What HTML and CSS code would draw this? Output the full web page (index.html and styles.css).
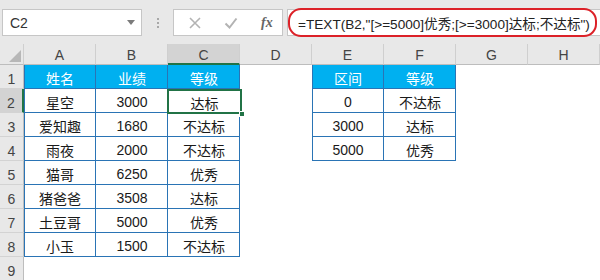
FILE: index.html
```html
<!DOCTYPE html>
<html lang="zh">
<head>
<meta charset="utf-8">
<link rel="stylesheet" href="styles.css">
</head>
<body>
<div class="topbar">
  <div class="namebox"><span class="ref">C2</span><span class="caret"></span></div>
  <div class="dots"><i></i><i></i><i></i></div>
  <div class="fxbox">
    <svg class="ico" width="14" height="14" viewBox="0 0 14 14"><path d="M2 2 L12 12 M12 2 L2 12" stroke="#b3b3b3" stroke-width="1.6" fill="none"/></svg>
    <svg class="ico" width="14" height="14" viewBox="0 0 14 14"><path d="M1.5 7.5 L5.5 11.5 L12.5 2.5" stroke="#b3b3b3" stroke-width="2" fill="none"/></svg>
    <span class="fx">fx</span>
  </div>
  <div class="formula"><div class="oval">=TEXT(B2,"[&gt;=5000]优秀;[&gt;=3000]达标;不达标")</div></div>
</div>
<div class="sheet">
  <div class="corner"><svg width="12" height="12" viewBox="0 0 12 12"><path d="M12 0 L12 12 L0 12 Z" fill="#b7b7b7"/></svg></div>
  <div class="ch">A</div><div class="ch">B</div><div class="ch csel">C</div><div class="ch">D</div><div class="ch">E</div><div class="ch">F</div><div class="ch">G</div><div class="ch">H</div>

  <div class="rh">1</div><div class="th l">姓名</div><div class="th">业绩</div><div class="th">等级</div><div class="c"></div><div class="th l">区间</div><div class="th">等级</div><div class="c"></div><div class="c"></div>

  <div class="rh rsel">2</div><div class="t l">星空</div><div class="t">3000</div><div class="t sel">达标<span class="handle"></span></div><div class="c"></div><div class="t l">0</div><div class="t">不达标</div><div class="c"></div><div class="c"></div>

  <div class="rh">3</div><div class="t l">爱知趣</div><div class="t">1680</div><div class="t">不达标</div><div class="c"></div><div class="t l">3000</div><div class="t">达标</div><div class="c"></div><div class="c"></div>

  <div class="rh">4</div><div class="t l">雨夜</div><div class="t">2000</div><div class="t">不达标</div><div class="c"></div><div class="t l">5000</div><div class="t">优秀</div><div class="c"></div><div class="c"></div>

  <div class="rh">5</div><div class="t l">猫哥</div><div class="t">6250</div><div class="t">优秀</div><div class="c"></div><div class="c"></div><div class="c"></div><div class="c"></div><div class="c"></div>

  <div class="rh">6</div><div class="t l">猪爸爸</div><div class="t">3508</div><div class="t">达标</div><div class="c"></div><div class="c"></div><div class="c"></div><div class="c"></div><div class="c"></div>

  <div class="rh">7</div><div class="t l">土豆哥</div><div class="t">5000</div><div class="t">优秀</div><div class="c"></div><div class="c"></div><div class="c"></div><div class="c"></div><div class="c"></div>

  <div class="rh">8</div><div class="t l">小玉</div><div class="t">1500</div><div class="t">不达标</div><div class="c"></div><div class="c"></div><div class="c"></div><div class="c"></div><div class="c"></div>

  <div class="rh">9</div><div class="c"></div><div class="c"></div><div class="c"></div><div class="c"></div><div class="c"></div><div class="c"></div><div class="c"></div><div class="c"></div>
</div>
</body>
</html>
```

FILE: styles.css
```css
* { box-sizing: border-box; }
html, body { margin: 0; padding: 0; background: #fff; }
body {
  width: 600px;
  height: 280px;
  overflow: hidden;
  font-family: "Liberation Sans", "Noto Sans CJK SC", sans-serif;
  color: #222;
}
.topbar {
  height: 44px;
  background: #e8e8e8;
  display: flex;
  align-items: flex-start;
  padding: 9px 0 0 2px;
}
.namebox {
  width: 140px;
  height: 27px;
  background: #fff;
  border: 1px solid #c6c6c6;
  display: flex;
  align-items: center;
  justify-content: space-between;
  padding: 0 6px 0 7px;
}
.ref { font-size: 14px; color: #333; }
.caret {
  width: 0; height: 0;
  border-left: 4px solid transparent;
  border-right: 4px solid transparent;
  border-top: 5px solid #7b7b7b;
}
.dots {
  width: 31px;
  height: 27px;
  display: flex;
  flex-direction: column;
  align-items: center;
  justify-content: center;
  gap: 2px;
}
.dots i { display: block; width: 2px; height: 2px; background: #a8a8a8; }
.fxbox {
  width: 110px;
  height: 27px;
  background: #fff;
  border: 1px solid #c6c6c6;
  display: flex;
  align-items: center;
  padding-left: 14px;
  gap: 22px;
}
.fx {
  font-family: "Liberation Serif", serif;
  font-style: italic;
  font-weight: bold;
  font-size: 14px;
  color: #666;
  margin-left: 1px;
}
.formula {
  margin-left: 4px;
  flex: 1;
  height: 27px;
  background: #fff;
  border: 1px solid #c6c6c6;
  border-right: none;
  position: relative;
}
.oval {
  position: absolute;
  left: 0;
  top: -2px;
  width: 309px;
  height: 29px;
  border: 2px solid #dc2128;
  border-radius: 13px;
  font-size: 13.6px;
  color: #222;
  display: flex;
  align-items: center;
  padding-left: 8px;
  white-space: nowrap;
}
.sheet {
  display: grid;
  grid-template-columns: 24px repeat(8, 72px);
  grid-template-rows: 21px repeat(9, 24px);
  font-size: 14px;
}
.corner {
  background: #e8e8e8;
  border-right: 1px solid #cfcfcf;
  border-bottom: 1px solid #bdbdbd;
  display: flex;
  align-items: flex-end;
  justify-content: flex-end;
  padding: 0 2px 2px 0;
}
.ch {
  background: #e8e8e8;
  border-right: 1px solid #cfcfcf;
  border-bottom: 1px solid #bdbdbd;
  display: flex;
  align-items: flex-end;
  justify-content: center;
  padding-bottom: 1px;
  color: #444;
  font-size: 14px;
}
.ch.csel {
  background: #d3d3d3;
  border-bottom: 2px solid #217346;
  padding-bottom: 0;
}
.rh {
  background: #e8e8e8;
  border-right: 1px solid #bdbdbd;
  border-bottom: 1px solid #d3d3d3;
  display: flex;
  align-items: flex-end;
  justify-content: center;
  padding-bottom: 1px;
  color: #444;
  font-size: 14px;
}
.rh.rsel {
  background: #d3d3d3;
  border-right: 2px solid #217346;
}
.c { background: #fff; }
.t, .th {
  display: flex;
  align-items: center;
  justify-content: center;
  padding-top: 2px;
  box-shadow: inset -1px -1px 0 #2a74b5;
}
.t.l, .th.l { box-shadow: inset 1px 0 0 #2a74b5, inset -1px -1px 0 #2a74b5; }
.th { background: #00b0f0; color: #fff; }
.t { background: #fff; color: #1a1a1a; }
.sel {
  position: relative;
  box-shadow: inset 0 0 0 2px #217346;
  margin-left: -1px;
  margin-right: -2px;
  margin-bottom: -1px;
  z-index: 2;
}
.handle {
  position: absolute;
  right: -3px;
  bottom: -3px;
  width: 6px;
  height: 6px;
  background: #217346;
  border: 1px solid #fff;
}
```
